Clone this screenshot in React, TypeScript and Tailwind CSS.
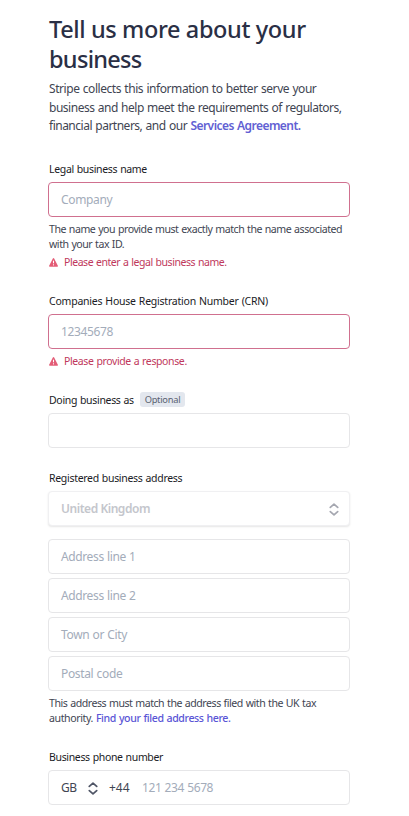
import type { ReactNode } from "react";

function Line({ className = "", children }: { className?: string; children: ReactNode }) {
  return <span className={`block w-max whitespace-nowrap ${className}`}>{children}</span>;
}

function Label({ className = "", children }: { className?: string; children: ReactNode }) {
  return (
    <label className={`ml-px block w-max whitespace-nowrap text-[10.5px] leading-4 text-[#1a1b25] ${className}`}>
      {children}
    </label>
  );
}

function Field({ invalid = false, className = "", children }: { invalid?: boolean; className?: string; children?: ReactNode }) {
  return (
    <div
      className={`flex h-[35px] w-[302px] items-center rounded-[4px] border bg-white px-3 pt-0.5 text-[12px] whitespace-nowrap text-[#a3acba] ${
        invalid ? "border-[#d0708f]" : "border-[#e6e6e8]"
      } ${className}`}
    >
      {children}
    </div>
  );
}

function ErrorText({ className = "", children }: { className?: string; children: ReactNode }) {
  return (
    <div className="ml-px flex h-[15px] items-center text-[10.5px] whitespace-nowrap text-[#c0395c]">
      <svg className="mr-[6px] h-[9px] w-[9px]" viewBox="0 0 9 9">
        <path d="M4.5.9 8.2 8H.8Z" fill="#e35d77" stroke="#e35d77" strokeWidth="1.5" strokeLinejoin="round" />
        <path d="M4.5 2.7v2.6M4.5 6.3v1.1" stroke="#fff" strokeWidth="1" />
      </svg>
      <span className={`pt-px ${className}`}>{children}</span>
    </div>
  );
}

function Chevrons({ className = "" }: { className?: string }) {
  return (
    <svg className={`h-[13px] w-[10px] shrink-0 ${className}`} viewBox="0 0 10 13" fill="none" stroke="currentColor" strokeWidth="1.7" strokeLinecap="round" strokeLinejoin="round">
      <path d="M1.3 4.4 5 1.1l3.7 3.3M1.3 8.6 5 11.9l3.7-3.3" />
    </svg>
  );
}

export default function App() {
  return (
    <main className="h-[816px] w-[409px] overflow-hidden bg-white pt-[14px] pl-12 font-['Noto_Sans',sans-serif] text-[#414552]">
      <h1 className="ml-px text-[23.5px] leading-[30px] font-medium text-[#2a2f45]">
        <Line className="tracking-[-0.38px]">Tell us more about your</Line>
        <Line className="tracking-[-0.7px]">business</Line>
      </h1>
      <p className="mt-[6px] ml-px text-[12px] leading-[18.5px]">
        <Line className="tracking-[-0.44px] [word-spacing:0.6px]">Stripe collects this information to better serve your</Line>
        <Line className="tracking-[-0.48px] [word-spacing:0.6px]">business and help meet the requirements of regulators,</Line>
        <Line className="tracking-[-0.5px] [word-spacing:0.7px]">
          financial partners, and our{" "}
          <a className="font-semibold tracking-[-0.55px] text-[#625fd3]">Services Agreement.</a>
        </Line>
      </p>

      <section className="mt-[25px]">
        <Label className="tracking-[-0.33px] [word-spacing:0.5px]">Legal business name</Label>
        <Field invalid className="mt-[5px] tracking-[-0.35px]">Company</Field>
        <p className="mt-[5px] ml-px text-[10.6px] leading-[15px]">
          <Line className="tracking-[-0.46px] [word-spacing:0.5px]">The name you provide must exactly match the name associated</Line>
          <Line className="tracking-[-0.46px] [word-spacing:0.5px]">with your tax ID.</Line>
        </p>
        <div className="mt-[3px]">
          <ErrorText className="tracking-[-0.44px] [word-spacing:0.5px]">Please enter a legal business name.</ErrorText>
        </div>
      </section>

      <section className="mt-[23px]">
        <Label className="tracking-[-0.22px] [word-spacing:0.5px]">Companies House Registration Number (CRN)</Label>
        <Field invalid className="mt-[5px] tracking-[-0.35px]">12345678</Field>
        <div className="mt-[5px]">
          <ErrorText className="tracking-[-0.38px] [word-spacing:0.5px]">Please provide a response.</ErrorText>
        </div>
      </section>

      <section className="mt-[23px]">
        <div className="flex h-4 items-center">
          <div className="w-[92px]">
            <Label className="tracking-[-0.32px] [word-spacing:0.5px]">Doing business as</Label>
          </div>
          <span className="flex h-[15px] w-[45px] items-center justify-center rounded-[3px] bg-[#e3e7ee] pt-px text-[9.3px] tracking-[-0.25px] text-[#596171]">
            Optional
          </span>
        </div>
        <Field className="mt-[5px]" />
      </section>

      <section className="mt-[22px]">
        <Label className="tracking-[-0.3px] [word-spacing:0.5px]">Registered business address</Label>
        <Field className="mt-[5px] justify-between border-[#f0f0f2] font-semibold tracking-[-0.45px] text-[#c4c6cc] shadow-[0_1px_2px_rgba(0,0,0,0.1)]">
          <span>United Kingdom</span>
          <Chevrons className="-mr-[2px] text-[#a5a7b0]" />
        </Field>
        <div className="mt-[13px] flex flex-col gap-1">
          <Field className="tracking-[-0.38px] [word-spacing:0.5px]">Address line 1</Field>
          <Field className="tracking-[-0.38px] [word-spacing:0.5px]">Address line 2</Field>
          <Field className="tracking-[-0.35px] [word-spacing:0.5px]">Town or City</Field>
          <Field className="tracking-[-0.35px] [word-spacing:0.5px]">Postal code</Field>
        </div>
        <p className="mt-[5px] ml-px text-[10.6px] leading-[15px]">
          <Line className="tracking-[-0.48px] [word-spacing:0.6px]">This address must match the address filed with the UK tax</Line>
          <Line className="tracking-[-0.41px] [word-spacing:0.6px]">
            authority. <a className="font-medium tracking-[-0.4px] text-[#5a55d6]">Find your filed address here.</a>
          </Line>
        </p>
      </section>

      <section className="mt-[23px]">
        <Label className="tracking-[-0.34px] [word-spacing:0.5px]">Business phone number</Label>
        <Field className="mt-[5px]">
          <span className="w-[27px] tracking-[-0.6px] text-[#414552]">GB</span>
          <Chevrons className="text-[#4f5566]" />
          <span className="ml-[11px] w-[33px] text-[#414552]">+44</span>
          <span className="tracking-[-0.4px] [word-spacing:0.5px]">121 234 5678</span>
        </Field>
      </section>
    </main>
  );
}
